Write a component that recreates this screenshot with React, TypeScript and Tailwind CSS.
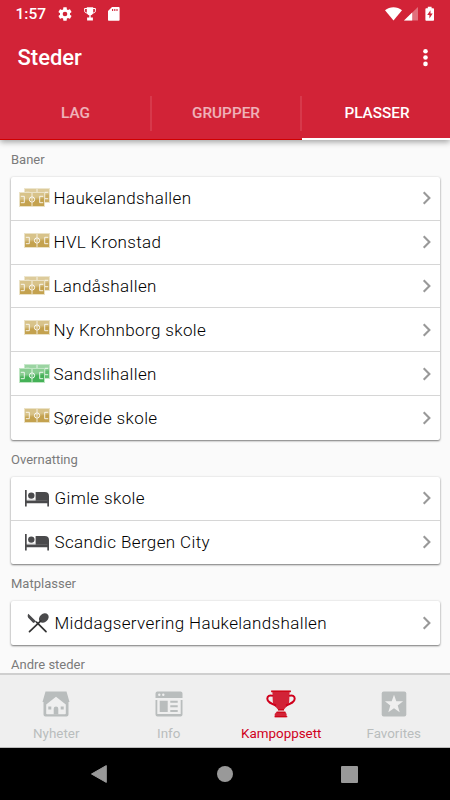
import React from 'react';

function Gear() {
  return (
    <svg width="16" height="16" viewBox="0 0 24 24" fill="#fff">
      <path d="M19.43 12.98c.04-.32.07-.64.07-.98s-.03-.66-.07-.98l2.11-1.65c.19-.15.24-.42.12-.64l-2-3.46c-.12-.22-.39-.3-.61-.22l-2.49 1c-.52-.4-1.08-.73-1.69-.98l-.38-2.65C14.46 2.18 14.25 2 14 2h-4c-.25 0-.46.18-.49.42l-.38 2.65c-.61.25-1.17.59-1.69.98l-2.49-1c-.23-.09-.49 0-.61.22l-2 3.46c-.13.22-.07.49.12.64l2.11 1.65c-.04.32-.07.65-.07.98s.03.66.07.98l-2.11 1.65c-.19.15-.24.42-.12.64l2 3.46c.12.22.39.3.61.22l2.49-1c.52.4 1.08.73 1.69.98l.38 2.65c.03.24.24.42.49.42h4c.25 0 .46-.18.49-.42l.38-2.65c.61-.25 1.17-.59 1.69-.98l2.49 1c.23.09.49 0 .61-.22l2-3.46c.12-.22.07-.49-.12-.64l-2.11-1.65zM12 15.500A3.500 3.500 0 1 1 12 8.500a3.500 3.500 0 0 1 0 7z" />
    </svg>
  );
}

function SmallCup() {
  return (
    <svg width="12" height="14" viewBox="0 0 12 14">
      <path d="M2.800.3h6.400v5.200c0 1.500-1.100 2.500-2.500 2.800v2.300h2.200V13.500H3.100v-2.900h2.200V8.300c-1.400-.3-2.500-1.300-2.500-2.800z" fill="#fff" />
      <path d="M3 1.500H.6v2.300C.6 5.300 1.600 6 3.200 6M9 1.500h2.400v2.300c0 1.500-1 2.200-2.600 2.200" fill="none" stroke="#fff" strokeWidth="1" />
    </svg>
  );
}

function SdCard() {
  return (
    <svg width="12" height="14" viewBox="0 0 12 14">
      <path d="M4 0h6.600c.6 0 1 .4 1 1v11.800c0 .6-.4 1-1 1H1c-.6 0-1-.4-1-1V4z" fill="#fff" />
      <path d="M4.600 2v2M6.800 2v2M9 2v2" stroke="#d22337" strokeWidth="1.100" />
    </svg>
  );
}

function Signals() {
  return (
    <svg width="52" height="16" viewBox="0 0 52 16">
      <path d="M0 4.200C4.700.2 12.300.2 17 4.200L8.500 14.600z" fill="#fff" />
      <path d="M33 1v13.500H19z" fill="#fff" fillOpacity=".35" />
      <path d="M27.200 6.600v7.900H19z" fill="#fff" />
      <path d="M42.800 2.200V.8h3.800v1.400h1.600c.5 0 .8.3.8.8v11c0 .5-.3.800-.8.800h-7c-.5 0-.8-.3-.8-.8V3c0-.5.3-.8.8-.8z" fill="#fff" />
      <path d="M45.500 4.300l-3.300 4.700h2.200v3.600l3.300-5h-2.200z" fill="#d22337" />
    </svg>
  );
}

type Tone = 'gold' | 'green';

function Pitch({ tone, id }: { tone: Tone; id: string }) {
  const edge = tone === 'gold' ? '#ebe2c6' : '#bfe6c3';
  const light = tone === 'gold' ? '#d8c38a' : '#8acd92';
  const deep = tone === 'gold' ? '#c4a24f' : '#45b157';
  return (
    <svg width="26" height="15" viewBox="0 0 26 15">
      <defs>
        <linearGradient id={id} x1="0" y1="0" x2=".2" y2="1">
          <stop offset="0" stopColor={light} />
          <stop offset=".45" stopColor={light} />
          <stop offset=".65" stopColor={deep} />
          <stop offset="1" stopColor={deep} />
        </linearGradient>
      </defs>
      <rect x=".5" y=".5" width="25" height="14" fill={`url(#${id})`} stroke={edge} />
      <path d="M13 1v3.800M13 10.200v3.800" fill="none" stroke="#fff" strokeWidth="1" strokeOpacity=".75" />
      <path d="M1.800 4.300h3.500v6.400H1.800M24.200 4.300h-3.500v6.400h3.500" fill="none" stroke="#fff" strokeWidth="1" strokeOpacity=".85" />
      <circle cx="13" cy="7.500" r="2.600" fill="none" stroke="#fff" strokeWidth="1" />
      <path d="M13 6v3" stroke="#fff" strokeWidth=".8" />
    </svg>
  );
}

function PitchIcon({ tone, stacked, id }: { tone: Tone; stacked: boolean; id: string }) {
  if (!stacked) {
    return (
      <div className="relative -top-[2px] ml-[5px]">
        <Pitch tone={tone} id={id} />
      </div>
    );
  }
  return (
    <div className="relative h-[20px] w-[31px]">
      <div className="absolute left-[5px] top-0 opacity-85">
        <Pitch tone={tone} id={id + 'b'} />
      </div>
      <div className="absolute left-0 top-[4px]">
        <Pitch tone={tone} id={id + 'a'} />
      </div>
    </div>
  );
}

function Bed() {
  return (
    <svg width="24" height="17" viewBox="0 0 24 17" fill="#4a4a4c">
      <path d="M0 0h1.700v10.600h20.600V9.400H24V16.600h-1.700v-3.300H1.700v3.300H0z" />
      <circle cx="6.300" cy="5.600" r="3.200" />
      <path d="M10.600 2h9.200C22.500 2 24 3.500 24 6v4.800H10.600z" />
      <path d="M2.300 10h8.200" stroke="#aaa" strokeWidth=".6" />
    </svg>
  );
}

function Cutlery() {
  return (
    <svg width="22" height="20" viewBox="0 0 22 20">
      <ellipse cx="16.800" cy="5" rx="4.200" ry="5.300" transform="rotate(48 16.800 5)" fill="#4a4a4c" />
      <path d="M13.800 7.900L2.500 18.600" stroke="#333" strokeWidth="1.700" strokeLinecap="round" />
      <path d="M1.300.7C.2 2.500.6 4.300 2.200 5.800l4.100 4.100 2.900-1.400z" fill="#4a4a4c" />
      <path d="M9.500 9.200l9.500 9.400" stroke="#333" strokeWidth="1.700" strokeLinecap="round" />
    </svg>
  );
}

function Chevron() {
  return (
    <svg width="10" height="14" viewBox="0 0 10 14" className="mr-[8px]">
      <path d="M1.700 1.200L7.400 7l-5.700 5.800" fill="none" stroke="#999" strokeWidth="2.100" />
    </svg>
  );
}

function Row({ icon, label, indent }: { icon: React.ReactNode; label: string; indent: string }) {
  return (
    <div className="flex h-[43.8px] items-center border-b border-[#d6d6d6] last:border-b-0">
      <div className={'flex shrink-0 items-center ' + indent}>{icon}</div>
      <span className="flex-1 whitespace-nowrap text-[17px] font-light leading-5 tracking-[0.370px] text-black">{label}</span>
      <Chevron />
    </div>
  );
}

function Card({ children }: { children: React.ReactNode }) {
  return (
    <div className="ml-[11px] mr-[10px] rounded-[2px] bg-white shadow-[0_1px_2px_rgba(0,0,0,0.5),0_0_3px_rgba(0,0,0,0.08)]">
      {children}
    </div>
  );
}

function Heading({ children, className }: { children: React.ReactNode; className: string }) {
  return <h2 className={'pl-[11px] text-[13px] leading-4 text-[#7b7b7b] ' + className}>{children}</h2>;
}

const pitches: { name: string; tone: Tone; stacked: boolean }[] = [
  { name: 'Haukelandshallen', tone: 'gold', stacked: true },
  { name: 'HVL Kronstad', tone: 'gold', stacked: false },
  { name: 'Landåshallen', tone: 'gold', stacked: true },
  { name: 'Ny Krohnborg skole', tone: 'gold', stacked: false },
  { name: 'Sandslihallen', tone: 'green', stacked: true },
  { name: 'Søreide skole', tone: 'gold', stacked: false },
];

function HouseIcon() {
  return (
    <svg width="28" height="26" viewBox="0 0 28 26">
      <path d="M3.500.5h21L27.500 11H26.500V23.500a2 2 0 0 1-2 2h-21a2 2 0 0 1-2-2V11H.5z" fill="#b9bdbd" />
      <path d="M14 5.800l9.800 7.700v9a.8.800 0 0 1-.8.800H5a.8.800 0 0 1-.8-.8v-9z" fill="#efefef" />
      <path d="M11.700 23.500v-5.700a2.300 2.300 0 0 1 4.600 0v5.700zM6.300 15.500h3v3h-3zM18.700 15.500h3v3h-3z" fill="#b9bdbd" />
    </svg>
  );
}

function InfoIcon() {
  return (
    <svg width="28" height="26" viewBox="0 0 28 26">
      <path d="M.5 7V2.500a2 2 0 0 1 2-2h23a2 2 0 0 1 2 2V7zM.5 9h27v14.500a2 2 0 0 1-2 2h-23a2 2 0 0 1-2-2z" fill="#b9bdbd" />
      <circle cx="4.300" cy="3.800" r="1.200" fill="#efefef" />
      <circle cx="8.300" cy="3.800" r="1.200" fill="#efefef" />
      <path d="M2.300 9h23.400v14H2.300z" fill="#efefef" />
      <path d="M4.700 9.700h8v11.200h-8zM15.300 9.700h7.400v2h-7.400zM15.300 14.200h7.400v2h-7.400zM15.300 18.900h7.400v2h-7.400z" fill="#b9bdbd" />
    </svg>
  );
}

function CupIcon() {
  return (
    <svg width="30" height="28" viewBox="0 0 30 28">
      <path d="M5.200.5h19.600v1.700h-1.200l-.4 9.300c-.3 4.200-3.500 5.700-5.200 8v1h-6v-1c-1.700-2.300-4.900-3.800-5.200-8L6.400 2.200H5.200z" fill="#d22337" />
      <path d="M7 5.900C3.500 4.900 1.300 6.100 1.300 8.800c0 3.300 3.600 4.800 8.700 6.700M23 5.900c3.500-1 5.700.2 5.700 2.900 0 3.300-3.600 4.800-8.700 6.700" fill="none" stroke="#d0001c" strokeWidth="2" />
      <path d="M10.700 21.700h8.600l1.300 2.300v3.300H8.700V24z" fill="#d22337" />
      <path d="M5.200 1.300h19.600M12 19.700h6M10.700 22.200h8.600M8.700 26.700h12.600" stroke="#cc0010" strokeWidth="1" />
    </svg>
  );
}

function StarIcon() {
  return (
    <svg width="26" height="26" viewBox="0 0 26 26">
      <rect x=".7" y=".5" width="24.600" height="25" rx="2" fill="#b9bdbd" />
      <path d="M13 3.800l2.300 6.500h6.800l-5.400 4.200 2 6.700L13 17.300l-5.700 3.900 2-6.700-5.400-4.200h6.800z" fill="#efefef" />
    </svg>
  );
}

function NavItem({ icon, label, color }: { icon: React.ReactNode; label: string; color: string }) {
  return (
    <button className="flex flex-1 flex-col items-center pt-[15px]">
      <span className="flex h-[28px] items-center">{icon}</span>
      <span className={'mt-[8px] text-[13.400px] leading-4 ' + color}>{label}</span>
    </button>
  );
}

export default function App() {
  return (
    <div className="flex h-[800px] w-[450px] flex-col overflow-hidden bg-[#fafafa] font-[Roboto,sans-serif]">
      <header className="z-10 flex h-[140px] shrink-0 flex-col bg-[#d22337] text-white shadow-[0_2px_6px_rgba(0,0,0,0.36)]">
        <div className="flex h-[28px] items-center pl-[15.500px] pr-[3px]">
          <span className="w-[41.500px] text-[15.500px] font-medium leading-5">1:57</span>
          <Gear />
          <span className="ml-[11px]"><SmallCup /></span>
          <span className="ml-[12px]"><SdCard /></span>
          <span className="ml-auto mr-[10px]"><Signals /></span>
        </div>
        <div className="flex h-[60px] items-center justify-between pl-[17.500px] pr-[22px]">
          <h1 className="text-[22px] font-medium leading-7">Steder</h1>
          <svg width="5" height="20" viewBox="0 0 5 20" fill="#fff">
            <circle cx="2.500" cy="3.200" r="2.300" /><circle cx="2.500" cy="9.500" r="2.300" /><circle cx="2.500" cy="15.900" r="2.300" />
          </svg>
        </div>
        <nav className="grid h-[52px] shrink-0 grid-cols-[152px_150px_148px] text-[15.300px] font-medium text-white/65">
          <div className="flex items-center border-b border-[#d00000]"><span className="flex-1 pl-px text-center">LAG</span><i className="h-[35px] w-[2px] bg-white/10" /></div>
          <div className="flex items-center border-b border-[#d00000]"><span className="flex-1 text-center">GRUPPER</span><i className="h-[35px] w-[2px] bg-white/10" /></div>
          <div className="flex items-center justify-center border-b-[2.500px] border-white pl-[2px] pt-px text-white">PLASSER</div>
        </nav>
      </header>

      <main className="min-h-0 flex-1 overflow-hidden">
        <Heading className="pb-[9px] pt-[12px]">Baner</Heading>
        <Card>
          {pitches.map((p, i) => (
            <Row key={p.name} label={p.name} indent="w-[42.500px] pl-[8px]" icon={<PitchIcon tone={p.tone} stacked={p.stacked} id={'pitch' + i} />} />
          ))}
        </Card>
        <Heading className="pb-[9px] pt-[12px]">Overnatting</Heading>
        <Card>
          <Row label="Gimle skole" indent="w-[43.500px] pl-[14px]" icon={<Bed />} />
          <Row label="Scandic Bergen City" indent="w-[43.500px] pl-[14px]" icon={<Bed />} />
        </Card>
        <Heading className="pb-[9px] pt-[12px]">Matplasser</Heading>
        <Card>
          <Row label="Middagservering Haukelandshallen" indent="w-[43.500px] pl-[15.500px]" icon={<Cutlery />} />
        </Card>
        <Heading className="pt-[12px]">Andre steder</Heading>
      </main>

      <nav className="z-10 flex h-[75px] shrink-0 border-b border-t-2 border-b-[#bbb] border-t-[#cfcfcf] bg-[#efefef]">
        <NavItem icon={<HouseIcon />} label="Nyheter" color="text-[#b9bdbd]" />
        <NavItem icon={<InfoIcon />} label="Info" color="text-[#b9bdbd]" />
        <NavItem icon={<CupIcon />} label="Kampoppsett" color="text-[#d0001c]" />
        <NavItem icon={<StarIcon />} label="Favorites" color="text-[#b9bdbd]" />
      </nav>

      <footer className="flex h-[52px] shrink-0 items-center bg-black pl-[91px]">
        <svg width="16" height="18" viewBox="0 0 16 18"><path d="M15.300.6v16.800L.5 9z" fill="#999" stroke="#999" strokeLinejoin="round" /></svg>
        <div className="ml-[110px] size-[16px] rounded-full bg-[#999]" />
        <div className="ml-[108px] size-[17px] rounded-[1px] bg-[#999]" />
      </footer>
    </div>
  );
}
